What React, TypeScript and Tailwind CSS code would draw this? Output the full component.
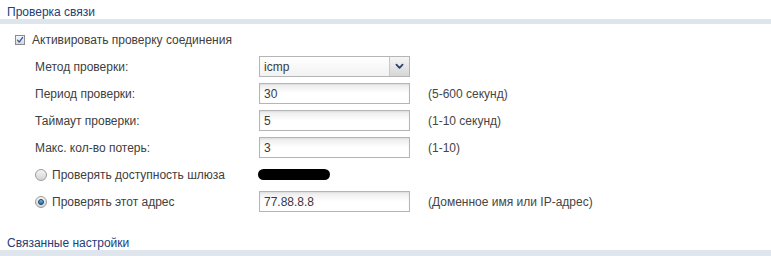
import React from "react";

function Check() {
  return (
    <span className="flex h-[10px] w-[10px] items-center justify-center border border-[#8c8c8c] bg-gradient-to-b from-[#f7f7f7] to-[#d8d8d8]">
      <svg viewBox="0 0 10 10" className="h-[10px] w-[10px]">
        <path d="M2 5.2 L4.1 7.6 L8.3 1.8" fill="none" stroke="#2b5fb0" strokeWidth="1.7" strokeLinecap="round" strokeLinejoin="round" />
      </svg>
    </span>
  );
}

function Radio({ checked }: { checked?: boolean }) {
  return (
    <span className="flex h-[12px] w-[12px] items-center justify-center rounded-full border border-[#9c9c9c] bg-gradient-to-b from-[#f4f4f4] to-[#d4d4d4]">
      {checked && (
        <span className="h-[6px] w-[6px] rounded-full border border-[#1b3c66] bg-gradient-to-b from-[#6fc0ee] to-[#1a6fb0]" />
      )}
    </span>
  );
}

function Field({ value }: { value: string }) {
  return (
    <div className="flex h-[21px] w-[151px] items-center border border-[#b5b5b5] bg-gradient-to-b from-[#ebebeb] via-white to-white pl-[4px] text-[12px] text-[#3a3a3a] shadow-[inset_0_1px_2px_rgba(0,0,0,0.06)]">
      {value}
    </div>
  );
}

function Row({ label, children, hint }: { label: React.ReactNode; children: React.ReactNode; hint?: string }) {
  return (
    <div className="grid h-[21px] grid-cols-[224px_169px_auto] items-center">
      <div className="flex items-center">{label}</div>
      <div>{children}</div>
      <div className="text-[12px] text-[#454545]">{hint}</div>
    </div>
  );
}

export default function App() {
  return (
    <div className="h-[256px] w-[771px] overflow-hidden bg-white font-['Liberation_Sans',Arial,sans-serif] text-[12px] text-[#404040]">
      <div className="h-[19px] pl-[7px] pt-[6px] text-[12px] leading-[13px] text-[#23407a]">Проверка связи</div>
      <div className="h-[5px] bg-[#dfe5ec]" />

      <div className="mt-[10px] flex h-[12px] items-center gap-[7px] pl-[15px]">
        <Check />
        <span>Активировать проверку соединения</span>
      </div>

      <div className="mt-[10px] flex flex-col gap-[6px] pl-[35px]">
        <Row label="Метод проверки:">
          <div className="flex h-[21px] w-[151px] border border-[#b5b5b5] bg-gradient-to-b from-white to-[#f2f2f2] text-[12px] text-[#3a3a3a]">
            <span className="flex flex-1 items-center pl-[4px]">icmp</span>
            <span className="flex w-[20px] items-center justify-center border-l border-[#c8c8c8] bg-gradient-to-b from-[#f5f5f5] to-[#d6d6d6]">
              <svg viewBox="0 0 10 8" className="h-[7px] w-[9px]">
                <path d="M1.5 1.8 L5 5.5 L8.5 1.8" fill="none" stroke="#2a3f6e" strokeWidth="2" strokeLinecap="round" strokeLinejoin="round" />
              </svg>
            </span>
          </div>
        </Row>
        <Row label="Период проверки:" hint="(5-600 секунд)">
          <Field value="30" />
        </Row>
        <Row label="Таймаут проверки:" hint="(1-10 секунд)">
          <Field value="5" />
        </Row>
        <Row label="Макс. кол-во потерь:" hint="(1-10)">
          <Field value="3" />
        </Row>
        <Row
          label={
            <span className="flex items-center gap-[5px]">
              <Radio />
              <span>Проверять доступность шлюза</span>
            </span>
          }
        >
          <div className="-ml-[1px] h-[11px] w-[72px] rounded-full bg-black" />
        </Row>
        <Row
          label={
            <span className="flex items-center gap-[5px]">
              <Radio checked />
              <span>Проверять этот адрес</span>
            </span>
          }
          hint="(Доменное имя или IP-адрес)"
        >
          <Field value="77.88.8.8" />
        </Row>
      </div>

      <div className="flex h-[38px] items-end pl-[7px] text-[12px] leading-[13px] text-[#23407a]">Связанные настройки</div>
      <div className="h-[6px] bg-[#dfe5ec]" />
    </div>
  );
}
